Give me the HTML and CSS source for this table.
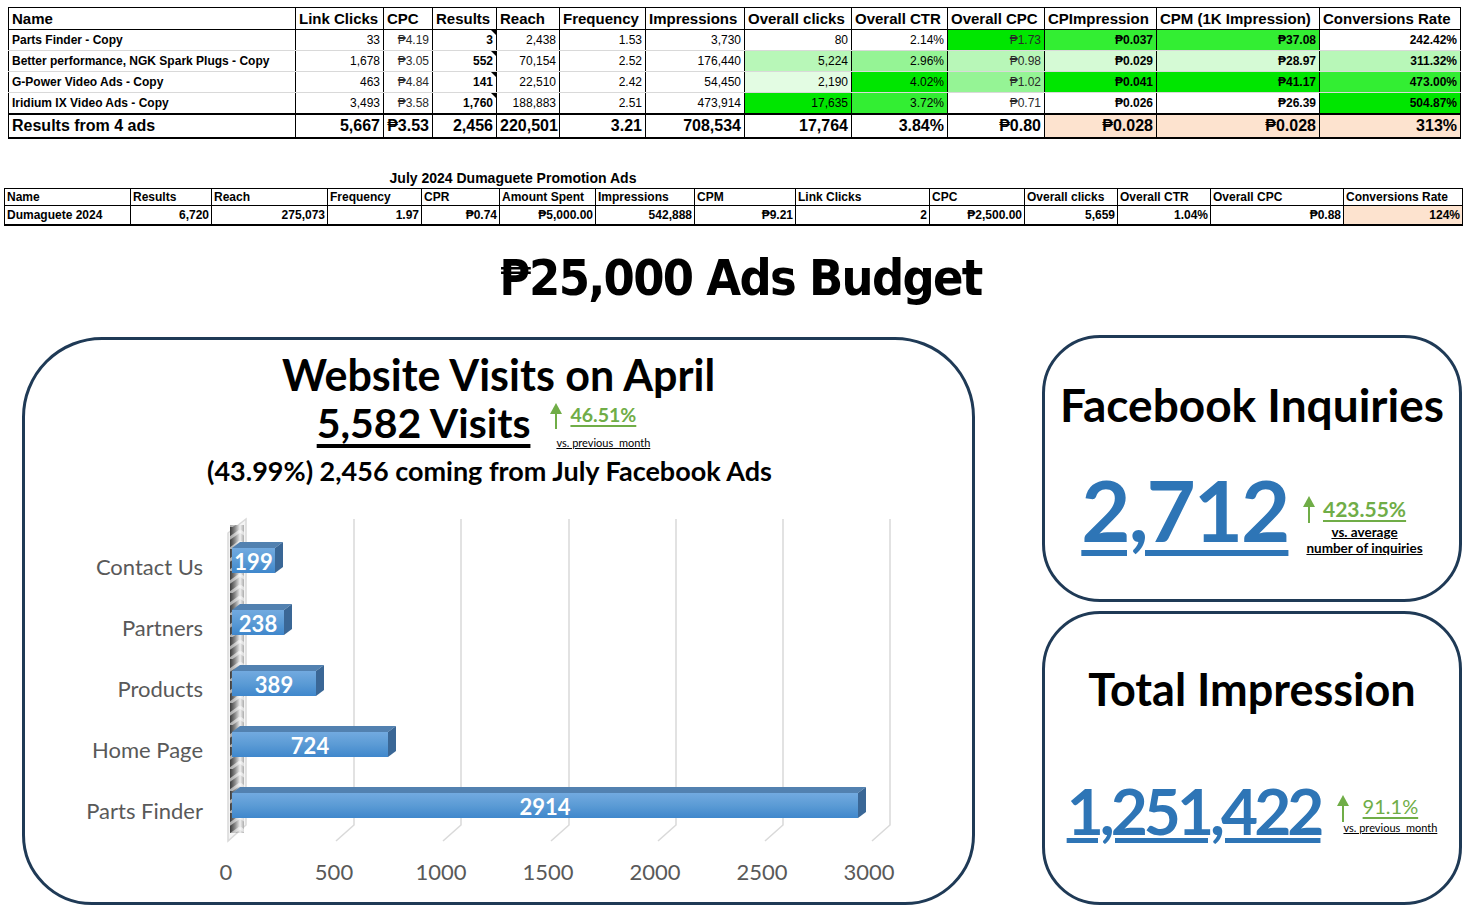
FILE: index.html
```html
<!DOCTYPE html>
<html>
<head>
<meta charset="utf-8">
<link rel="stylesheet" href="styles.css">
</head>
<body>
<div class="page">
  <div class="t1wrap">
    <table class="t1">
      <colgroup>
        <col style="width:287px"><col style="width:88px"><col style="width:49px"><col style="width:64px"><col style="width:63px"><col style="width:86px"><col style="width:99px"><col style="width:107px"><col style="width:96px"><col style="width:97px"><col style="width:112px"><col style="width:163px"><col style="width:141px">
      </colgroup>
      <thead>
        <tr><th>Name</th><th>Link Clicks</th><th>CPC</th><th>Results</th><th>Reach</th><th>Frequency</th><th>Impressions</th><th>Overall clicks</th><th>Overall CTR</th><th>Overall CPC</th><th>CPImpression</th><th>CPM (1K Impression)</th><th>Conversions Rate</th></tr>
      </thead>
      <tbody>
        <tr><td class="nm">Parts Finder - Copy</td><td>33</td><td class="gr">₱4.19</td><td class="res">3</td><td>2,438</td><td>1.53</td><td>3,730</td><td>80</td><td>2.14%</td><td class="gr g0">₱1.73</td><td class="b g1">₱0.037</td><td class="b g1">₱37.08</td><td class="b">242.42%</td></tr>
        <tr><td class="nm">Better performance, NGK Spark Plugs - Copy</td><td>1,678</td><td class="gr">₱3.05</td><td class="res">552</td><td>70,154</td><td>2.52</td><td>176,440</td><td class="g3">5,224</td><td class="g2">2.96%</td><td class="gr g3">₱0.98</td><td class="b g4">₱0.029</td><td class="b g4">₱28.97</td><td class="b g3">311.32%</td></tr>
        <tr><td class="nm">G-Power Video Ads - Copy</td><td>463</td><td class="gr">₱4.84</td><td class="res">141</td><td>22,510</td><td>2.42</td><td>54,450</td><td class="g5">2,190</td><td class="g0">4.02%</td><td class="gr g2">₱1.02</td><td class="b g0">₱0.041</td><td class="b g0">₱41.17</td><td class="b g1">473.00%</td></tr>
        <tr><td class="nm">Iridium IX Video Ads - Copy</td><td>3,493</td><td class="gr">₱3.58</td><td class="res">1,760</td><td>188,883</td><td>2.51</td><td>473,914</td><td class="g0">17,635</td><td class="g1">3.72%</td><td class="gr">₱0.71</td><td class="b">₱0.026</td><td class="b">₱26.39</td><td class="b g0">504.87%</td></tr>
      </tbody>
      <tfoot>
        <tr><td class="nm">Results from 4 ads</td><td>5,667</td><td>₱3.53</td><td>2,456</td><td>220,501</td><td>3.21</td><td>708,534</td><td>17,764</td><td>3.84%</td><td>₱0.80</td><td class="pe">₱0.028</td><td class="pe">₱0.028</td><td class="pe">313%</td></tr>
      </tfoot>
    </table>
  </div>

  <div class="t2title">July 2024 Dumaguete Promotion Ads</div>
  <div class="t2wrap">
    <table class="t2">
      <colgroup>
        <col style="width:126px"><col style="width:81px"><col style="width:116px"><col style="width:94px"><col style="width:78px"><col style="width:96px"><col style="width:99px"><col style="width:101px"><col style="width:134px"><col style="width:95px"><col style="width:93px"><col style="width:93px"><col style="width:133px"><col style="width:119px">
      </colgroup>
      <tr class="h"><td>Name</td><td>Results</td><td>Reach</td><td>Frequency</td><td>CPR</td><td>Amount Spent</td><td>Impressions</td><td>CPM</td><td>Link Clicks</td><td>CPC</td><td>Overall clicks</td><td>Overall CTR</td><td>Overall CPC</td><td>Conversions Rate</td></tr>
      <tr class="d"><td class="l">Dumaguete 2024</td><td>6,720</td><td>275,073</td><td>1.97</td><td>₱0.74</td><td>₱5,000.00</td><td>542,888</td><td>₱9.21</td><td>2</td><td>₱2,500.00</td><td>5,659</td><td>1.04%</td><td>₱0.88</td><td class="pe">124%</td></tr>
    </table>
  </div>

  <h1 class="budget">₱25,000 Ads Budget</h1>

  <div class="bottom">
    <section class="card visits">
      <div class="vhead">
        <div class="vtitle">Website Visits on April</div>
        <div class="vrow">
          <span class="vnum">5,582 Visits</span>
          <div class="delta dv">
            <div class="drow">
              <svg class="arrow" width="12" height="26" viewBox="0 0 12 26"><polygon points="6,0 12,11 0,11" fill="#70ad47"/><rect x="5" y="10" width="2" height="16" fill="#70ad47"/></svg>
              <span class="pct">46.51%</span>
            </div>
            <div class="vs tiny">vs. previous&nbsp; month</div>
          </div>
        </div>
        <div class="vsub">(43.99%) 2,456 coming from July Facebook Ads</div>
      </div>
      <svg class="chart" width="947" height="394" viewBox="25 508 947 394">
        <defs>
          <linearGradient id="front" x1="0" y1="0" x2="0" y2="1">
            <stop offset="0" stop-color="#72aae0"/>
            <stop offset="0.5" stop-color="#5b9bd5"/>
            <stop offset="1" stop-color="#3f87cc"/>
          </linearGradient>
          <linearGradient id="wallg" x1="0" y1="0" x2="1" y2="0">
            <stop offset="0" stop-color="#f2f2f2"/>
            <stop offset="0.25" stop-color="#9a9a9a"/>
            <stop offset="0.5" stop-color="#3a3a3a"/>
            <stop offset="0.75" stop-color="#8a8a8a"/>
            <stop offset="1" stop-color="#eeeeee"/>
          </linearGradient>
          <pattern id="wave" x="0" y="0" width="20" height="22" patternUnits="userSpaceOnUse">
            <rect width="20" height="22" fill="url(#wallg)"/>
            <path d="M0 4 L10 11 L20 4 M0 15 L10 22 L20 15" stroke="#ffffff" stroke-opacity="0.55" stroke-width="3" fill="none"/>
          </pattern>
        </defs>
        <g class="grid" stroke="#d9d9d9" stroke-width="1.5" fill="none">
          <polyline points="354,520 354,826 336,842"/>
          <polyline points="461,520 461,826 443,842"/>
          <polyline points="569,520 569,826 551,842"/>
          <polyline points="676,520 676,826 658,842"/>
          <polyline points="783,520 783,826 765,842"/>
          <polyline points="890,520 890,826 872,842"/>
        </g>
        <polygon points="228,534 246,520 246,826 228,842" fill="#f4f4f4" stroke="#d9d9d9" stroke-width="1.5"/>
        <rect x="230" y="526" width="14" height="308" fill="url(#wave)"/>

        <g class="bar">
          <polygon points="232,549 240,543 283,543 275,549" fill="#5281b0"/>
          <polygon points="275,549 283,543 283,568 275,574" fill="#3a6796"/>
          <rect x="232" y="549" width="43" height="25" fill="url(#front)"/>
          <text x="253.5" y="571" class="bv">199</text>
        </g>
        <g class="bar">
          <polygon points="232,611 240,605 292,605 284,611" fill="#5281b0"/>
          <polygon points="284,611 292,605 292,630 284,636" fill="#3a6796"/>
          <rect x="232" y="611" width="52" height="25" fill="url(#front)"/>
          <text x="258" y="633" class="bv">238</text>
        </g>
        <g class="bar">
          <polygon points="232,672 240,666 324,666 316,672" fill="#5281b0"/>
          <polygon points="316,672 324,666 324,691 316,697" fill="#3a6796"/>
          <rect x="232" y="672" width="84" height="25" fill="url(#front)"/>
          <text x="274" y="694" class="bv">389</text>
        </g>
        <g class="bar">
          <polygon points="232,733 240,727 396,727 388,733" fill="#5281b0"/>
          <polygon points="388,733 396,727 396,752 388,758" fill="#3a6796"/>
          <rect x="232" y="733" width="156" height="25" fill="url(#front)"/>
          <text x="310" y="755" class="bv">724</text>
        </g>
        <g class="bar">
          <polygon points="232,794 240,788 866,788 858,794" fill="#5281b0"/>
          <polygon points="858,794 866,788 866,813 858,819" fill="#3a6796"/>
          <rect x="232" y="794" width="626" height="25" fill="url(#front)"/>
          <text x="545" y="816" class="bv">2914</text>
        </g>

        <g class="cat">
          <text x="203" y="576">Contact Us</text>
          <text x="203" y="637">Partners</text>
          <text x="203" y="698">Products</text>
          <text x="203" y="759">Home Page</text>
          <text x="203" y="820">Parts Finder</text>
        </g>
        <g class="tick">
          <text x="226" y="881">0</text>
          <text x="334" y="881">500</text>
          <text x="441" y="881">1000</text>
          <text x="548" y="881">1500</text>
          <text x="655" y="881">2000</text>
          <text x="762" y="881">2500</text>
          <text x="869" y="881">3000</text>
        </g>
      </svg>
    </section>

    <div class="rightcol">
      <section class="card kpi fb">
        <div class="ktitle">Facebook Inquiries</div>
        <div class="krow">
          <span class="knum big">2,712</span>
          <div class="delta df">
            <div class="drow">
              <svg class="arrow" width="12" height="27" viewBox="0 0 12 27"><polygon points="6,0 12,11 0,11" fill="#70ad47"/><rect x="5" y="10" width="2" height="17" fill="#70ad47"/></svg>
              <span class="pct bold">423.55%</span>
            </div>
            <div class="vs first">vs. average</div>
            <div class="vs">number of inquiries</div>
          </div>
        </div>
      </section>
      <section class="card kpi imp">
        <div class="ktitle">Total Impression</div>
        <div class="krow">
          <span class="knum mid">1,251,422</span>
          <div class="delta di">
            <div class="drow">
              <svg class="arrow" width="12" height="27" viewBox="0 0 12 27"><polygon points="6,0 12,11 0,11" fill="#70ad47"/><rect x="5" y="10" width="2" height="17" fill="#70ad47"/></svg>
              <span class="pct">91.1%</span>
            </div>
            <div class="vs tiny">vs. previous&nbsp; month</div>
          </div>
        </div>
      </section>
    </div>
  </div>
</div>
</body>
</html>
```
FILE: styles.css
```css
* { box-sizing: border-box; }
html, body { margin: 0; padding: 0; background: #fff; }
body { width: 1467px; height: 907px; overflow: hidden; font-family: "Liberation Sans", Arial, sans-serif; color: #000; }
.page { width: 1467px; height: 907px; }

/* ---------- table 1 ---------- */
.t1wrap { padding: 7px 0 0 8px; }
.t1 { border-collapse: collapse; table-layout: fixed; width: 1452px; }
.t1 th, .t1 td { padding: 0 3px; white-space: nowrap; overflow: hidden; border-left: 1px solid #000; border-right: 1px solid #000; line-height: 1; }
.t1 thead th { height: 22px; font-size: 15px; font-weight: bold; text-align: left; border-top: 1px solid #000; border-bottom: 1px solid #000; }
.t1 tbody td { height: 21px; font-size: 12px; text-align: right; border-bottom: 1px solid #d9d9d9; }
.t1 tbody tr:last-child td { border-bottom: none; }
.t1 td.nm { text-align: left; font-weight: bold; }
.t1 td.res { font-weight: bold; position: relative; }
.t1 td.res::after { content: ""; position: absolute; top: 0; right: 0; border-style: solid; border-width: 0 5px 5px 0; border-color: transparent #000 transparent transparent; }
.t1 td.b { font-weight: bold; }
.t1 td.gr { color: #2a2a2a; }
.t1 tfoot td { height: 24px; font-size: 16px; font-weight: bold; text-align: right; border-top: 2px solid #000; border-bottom: 2px solid #000; }
.t1 tfoot td.nm { text-align: left; }
.g0 { background: #00e600; }
.g1 { background: #33ee33; }
.g2 { background: #95f495; }
.g3 { background: #b8f7b8; }
.g4 { background: #d5fad5; }
.g5 { background: #e3fce3; }
.pe { background: #fde3cf; }

/* ---------- table 2 ---------- */
.t2title { width: 1026px; margin-top: 29px; height: 20px; line-height: 20px; text-align: center; font-size: 14px; font-weight: bold; }
.t2wrap { padding-left: 4px; }
.t2 { border-collapse: collapse; table-layout: fixed; width: 1458px; font-family: "Liberation Sans Narrow", "Liberation Sans", Arial, sans-serif; font-weight: bold; font-size: 12px; }
.t2 td { padding: 0 2px; white-space: nowrap; overflow: hidden; border: 1px solid #000; line-height: 1; }
.t2 tr.h td { height: 17px; text-align: left; }
.t2 tr.d td { height: 20px; text-align: right; border-bottom: 2px solid #000; }
.t2 tr.d td.l { text-align: left; }

/* ---------- headline ---------- */
.budget { margin: 22px 0 0 0; height: 60px; line-height: 60px; text-align: center; padding-left: 14px; font-family: "DejaVu Sans Condensed", "DejaVu Sans", sans-serif; font-stretch: condensed; font-weight: bold; font-size: 50px; letter-spacing: -1.7px; }

/* ---------- bottom ---------- */
.bottom { display: flex; margin-top: 27px; padding-left: 22px; align-items: flex-start; }
.card { border: 3px solid #1f3a56; background: #fff; }
.visits { width: 953px; height: 568px; margin-top: 2px; border-radius: 80px 80px 70px 70px; display: flex; flex-direction: column; overflow: hidden; }
.vhead { height: 168px; text-align: center; font-family: Lato, "Open Sans", sans-serif; font-weight: bold; padding-top: 13px; }
.vtitle { font-size: 43px; line-height: 44px; }
.vrow { display: flex; justify-content: center; align-items: flex-start; padding-right: 30px; margin-top: 4px; }
.vnum { font-size: 41px; line-height: 44px; text-decoration: underline; text-decoration-thickness: 4px; text-underline-offset: 6px; }
.vsub { font-size: 27px; line-height: 32px; margin-top: 6px; padding-right: 18px; }
.chart { display: block; margin-top: -1px; }
.chart .bv { font-family: Lato, "Open Sans", sans-serif; font-weight: bold; font-size: 22px; fill: #fff; text-anchor: middle; }
.chart .cat text { font-family: Lato, "Open Sans", sans-serif; font-size: 22px; fill: #595959; text-anchor: end; }
.chart .tick text { font-family: Lato, "Open Sans", sans-serif; font-size: 22px; fill: #595959; text-anchor: middle; }

/* ---------- deltas ---------- */
.delta { display: flex; flex-direction: column; align-items: center; font-family: Lato, "Open Sans", sans-serif; }
.drow { display: flex; justify-content: center; align-items: flex-start; }
.arrow { display: block; flex: none; margin-left: -20px; margin-right: 8px; }
.pct { color: #70ad47; text-decoration: underline; text-decoration-thickness: 2px; text-underline-offset: 3px; font-size: 20px; line-height: 22px; white-space: nowrap; }
.pct.bold { font-weight: bold; font-size: 21px; }
.vs { font-size: 13.5px; font-weight: bold; text-decoration: underline; line-height: 16px; white-space: nowrap; }
.vs.tiny { font-size: 11px; line-height: 12px; font-weight: normal; }

.dv { margin-left: 26px; margin-top: 2px; }
.dv .pct { margin-top: 1px; font-size: 19.5px; }
.dv .vs { margin-top: 8px; }

/* ---------- KPI cards ---------- */
.rightcol { margin-left: 67px; display: flex; flex-direction: column; gap: 9px; }
.kpi { width: 420px; border-radius: 58px; font-family: Lato, "Open Sans", sans-serif; text-align: center; }
.fb { height: 267px; padding-top: 40px; }
.imp { height: 294px; padding-top: 48px; }
.ktitle { font-weight: bold; line-height: 54px; }
.fb .ktitle { font-size: 46px; }
.imp .ktitle { font-size: 45px; }
.krow { display: flex; justify-content: center; align-items: flex-start; }
.knum { color: #2e75b6; font-weight: bold; text-decoration: underline; }
.knum.big { font-size: 85px; line-height: 96px; letter-spacing: -2px; text-decoration-thickness: 6px; text-underline-offset: 8px; }
.knum.mid { font-size: 64px; line-height: 72px; letter-spacing: -4px; text-decoration-thickness: 5px; text-underline-offset: 3px; }
.fb .krow { margin-top: 29px; }
.df { margin-left: 18px; margin-top: 35px; }
.df .pct { margin-top: 2px; }
.df .vs.first { margin-top: 1px; }
.imp .krow { margin-top: 59px; }
.di { margin-left: 23px; margin-top: 20px; }
.di .arrow { margin-left: -26px; margin-right: 14px; }
```
